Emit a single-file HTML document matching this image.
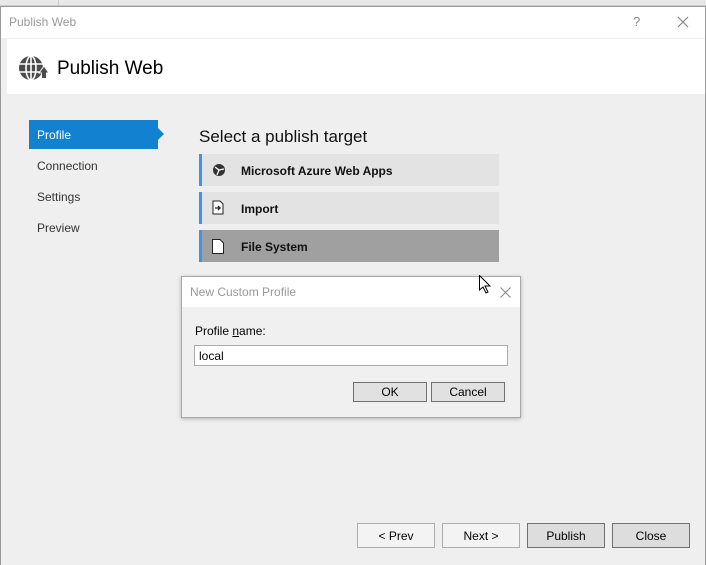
<!DOCTYPE html>
<html><head><style>
*{margin:0;padding:0;box-sizing:border-box}
body{width:706px;height:565px;background:#f0f0f0;position:relative;overflow:hidden;font-family:"Segoe UI","Liberation Sans",sans-serif;font-size:12px;color:#000}
.abs{position:absolute}
.win{left:0;top:6px;width:706px;height:559px;border:1px solid #9a9a9a;border-bottom:none;background:#efefef}
.title{left:0;top:0;width:704px;height:31px;background:#fff;color:#999;font-size:12px;padding:8px 0 0 8px}
.hdr{left:6px;top:32px;width:698px;height:55px;background:#fff}
.nav{left:28px;width:124px;height:28px;font-size:12px;color:#333;padding:8px 0 0 9px}
.item{left:199px;width:300px;height:32px;background:#e3e3e3;border-left:3px solid #3c95e8;font-size:12px;font-weight:bold;padding:10px 0 0 39px;color:#111}
.btn{top:523px;width:78px;height:25px;border:1px solid #adadad;background:#f3f3f3;text-align:center;line-height:24px;font-size:12px}
.btn.d{background:#dddddd;border-color:#707070}
</style></head><body>
<div class="abs" style="left:0;top:0;width:706px;height:6px;background:#e8e8e8;border-bottom:1px solid #ccc"></div>
<div class="abs" style="left:58px;top:0;width:1px;height:6px;background:#ccc"></div>
<div class="abs win">
  <div class="abs title">Publish Web</div>
  <div class="abs" style="left:632px;top:7px;color:#888;font-size:13px">?</div>
  <svg class="abs" style="left:676px;top:9px" width="12" height="12"><path d="M1 1L11 11M11 1L1 11" stroke="#888" stroke-width="1.2"/></svg>
  <div class="abs hdr">
    <svg class="abs" style="left:10px;top:14px" width="32" height="30" viewBox="0 0 32 30">
      <circle cx="14" cy="15" r="12" fill="#4a4a4a"/>
      <g stroke="#fff" stroke-width="1.6" fill="none"><ellipse cx="14" cy="15" rx="5" ry="12"/><path d="M2 11H26M2 19H26M14 3V27"/></g>
      <path d="M22 20 L27 13 L32 20 Z" fill="#4a4a4a" stroke="#fff" stroke-width="1"/>
      <rect x="25" y="19" width="4" height="6" fill="#4a4a4a"/>
    </svg>
    <div class="abs" style="left:50px;top:19px;font-size:19px;color:#000">Publish Web</div>
  </div>
</div>
<div class="abs" style="left:29px;top:120px;width:129px;height:29px;background:#1282d0"></div>
<svg class="abs" style="left:158px;top:128px" width="6" height="12"><path d="M0 0L6 6L0 12Z" fill="#1282d0"/></svg>
<div class="abs nav" style="top:120px;color:#fff">Profile</div>
<div class="abs nav" style="top:151px">Connection</div>
<div class="abs nav" style="top:182px">Settings</div>
<div class="abs nav" style="top:213px">Preview</div>
<div class="abs" style="left:199px;top:127px;font-size:17px;color:#111">Select a publish target</div>
<div class="abs item" style="top:154px">Microsoft Azure Web Apps</div>
<svg class="abs" style="left:212px;top:163px" width="14" height="14"><circle cx="7" cy="7" r="6" fill="#333"/><path d="M3 4L7 7L5 12M7 7L12 6" stroke="#fff" stroke-width="1.3" fill="none"/></svg>
<div class="abs item" style="top:192px">Import</div>
<svg class="abs" style="left:212px;top:200px" width="12" height="15"><path d="M1 1H8L11 4V14H1Z" fill="#fff" stroke="#222"/><path d="M3 8H8M6 6L8 8L6 10" stroke="#222" stroke-width="1.3" fill="none"/></svg>
<div class="abs item" style="top:230px;background:#a0a0a0">File System</div>
<svg class="abs" style="left:212px;top:239px" width="12" height="15"><path d="M.5 .5H8L11.5 4V14.5H.5Z" fill="#fff" stroke="#222"/></svg>
<div class="abs" style="left:181px;top:276px;width:340px;height:142px;background:#f0f0f0;border:1px solid #a8a8a8;box-shadow:0 1px 4px rgba(0,0,0,.25)">
  <div class="abs" style="left:0;top:0;width:338px;height:30px;background:#fff;color:#999;padding:8px 0 0 8px">New Custom Profile</div>
  <svg class="abs" style="left:318px;top:10px" width="11" height="11"><path d="M.5 .5L10.5 10.5M10.5 .5L.5 10.5" stroke="#888"/></svg>
  <div class="abs" style="left:13px;top:47px">Profile <u>n</u>ame:</div>
  <div class="abs" style="left:12px;top:68px;width:314px;height:21px;background:#fff;border:1px solid #aaa;padding:3px 0 0 4px">local</div>
  <div class="abs" style="left:171px;top:105px;width:74px;height:20px;border:1px solid #707070;background:#e1e1e1;text-align:center;line-height:19px">OK</div>
  <div class="abs" style="left:249px;top:105px;width:74px;height:20px;border:1px solid #707070;background:#e1e1e1;text-align:center;line-height:19px">Cancel</div>
</div>
<svg class="abs" style="left:479px;top:275px" width="12" height="19"><path d="M.5 .5V15L4 12L7 18L9 17L6 11H11Z" fill="#fff" stroke="#000"/></svg>
<div class="abs btn" style="left:357px">&lt; Prev</div>
<div class="abs btn" style="left:442px">Next &gt;</div>
<div class="abs btn d" style="left:527px">Publish</div>
<div class="abs btn d" style="left:612px">Close</div>
</body></html>
